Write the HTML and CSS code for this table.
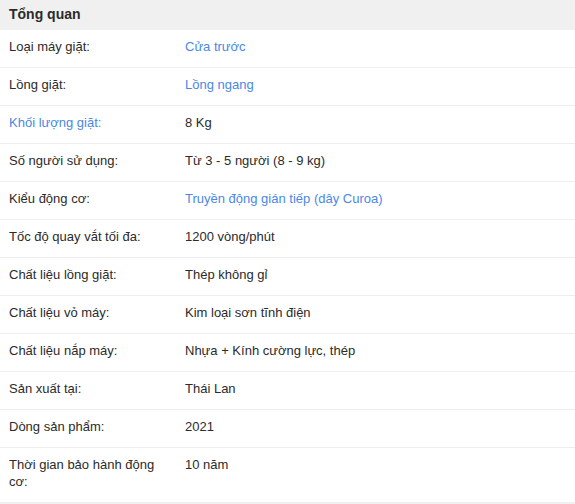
FILE: index.html
```html
<!DOCTYPE html>
<html lang="vi">
<head>
<meta charset="utf-8">
<link rel="stylesheet" href="styles.css">
</head>
<body>
<div class="specs">
  <div class="head">Tổng quan</div>
  <ul class="rows">
    <li class="row"><span class="label">Loại máy giặt:</span><span class="value link">Cửa trước</span></li>
    <li class="row"><span class="label">Lồng giặt:</span><span class="value link">Lồng ngang</span></li>
    <li class="row"><span class="label link">Khối lượng giặt:</span><span class="value">8 Kg</span></li>
    <li class="row"><span class="label">Số người sử dụng:</span><span class="value">Từ 3 - 5 người (8 - 9 kg)</span></li>
    <li class="row"><span class="label">Kiểu động cơ:</span><span class="value link">Truyền động gián tiếp (dây Curoa)</span></li>
    <li class="row"><span class="label">Tốc độ quay vắt tối đa:</span><span class="value">1200 vòng/phút</span></li>
    <li class="row"><span class="label">Chất liệu lồng giặt:</span><span class="value">Thép không gỉ</span></li>
    <li class="row"><span class="label">Chất liệu vỏ máy:</span><span class="value">Kim loại sơn tĩnh điện</span></li>
    <li class="row"><span class="label">Chất liệu nắp máy:</span><span class="value">Nhựa + Kính cường lực, thép</span></li>
    <li class="row"><span class="label">Sản xuất tại:</span><span class="value">Thái Lan</span></li>
    <li class="row"><span class="label">Dòng sản phẩm:</span><span class="value">2021</span></li>
    <li class="row"><span class="label">Thời gian bảo hành động cơ:</span><span class="value">10 năm</span></li>
  </ul>
  <div class="foot"></div>
</div>
</body>
</html>
```

FILE: styles.css
```css
* { box-sizing: border-box; }
html, body { margin: 0; padding: 0; background: #fff; }
body {
  font-family: "Liberation Sans", Arial, sans-serif;
  font-size: 13px;
  color: #2b2b2b;
}
.specs { width: 575px; }
.head {
  height: 30px;
  background: #f0f0f0;
  font-size: 14px;
  font-weight: bold;
  color: #2b2b2b;
  padding: 6px 9px 0;
  line-height: 17px;
}
.rows { list-style: none; margin: 0; padding: 0; }
.row {
  display: flex;
  border-top: 1px solid #eeeeee;
  line-height: 17px;
  padding: 8px 0 12px;
}
.row:first-child { border-top: none; }
.label {
  width: 185px;
  flex: none;
  padding: 0 20px 0 9px;
}
.value { flex: 1; }
.link { color: #4a88e6; }
.foot { height: 2px; background: #f0f0f0; }
```
